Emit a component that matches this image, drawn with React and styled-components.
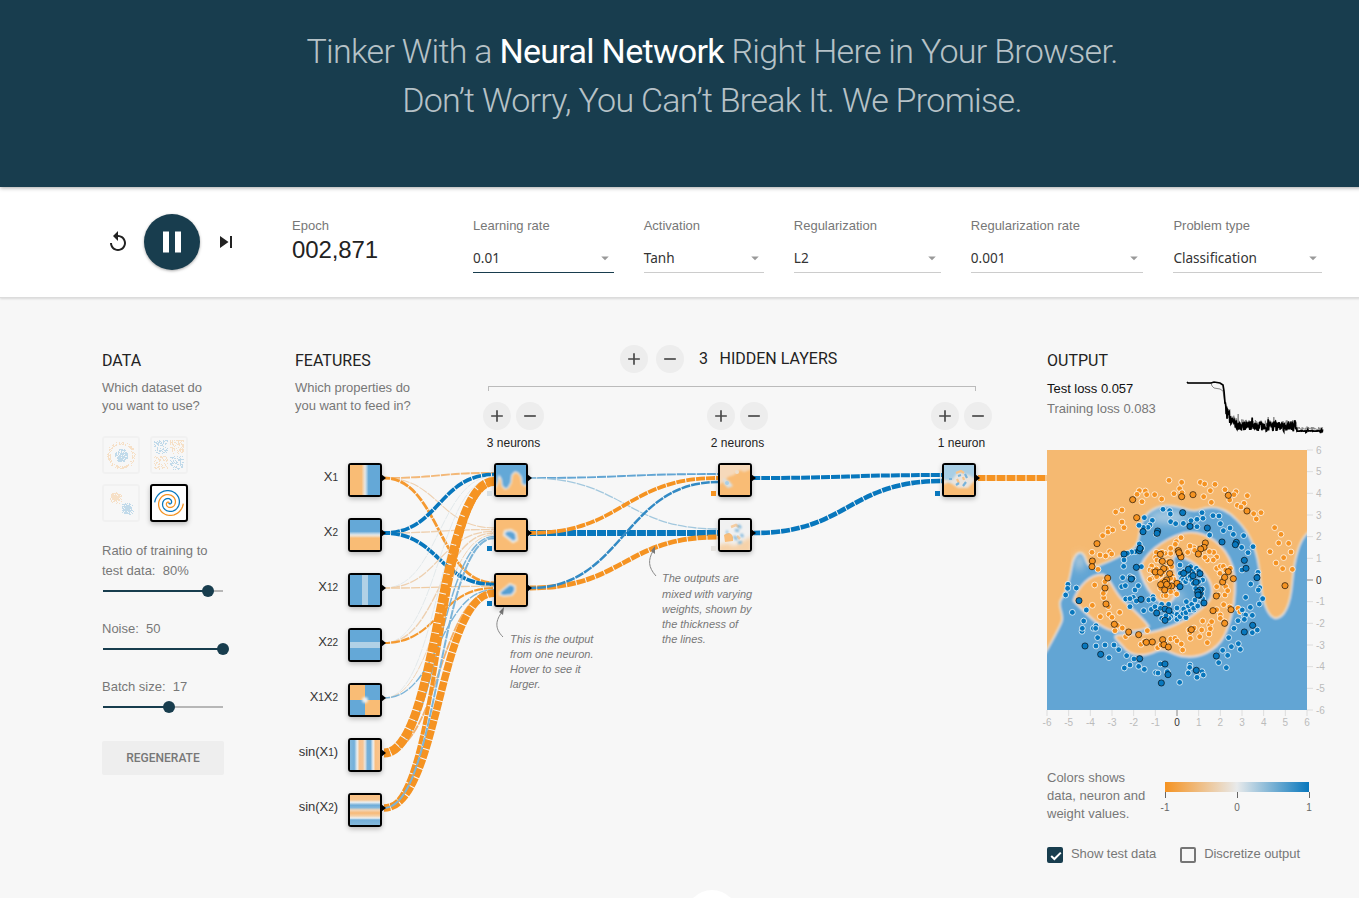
import React from "react";
import styled, { createGlobalStyle } from "styled-components";
import { MdReplay, MdPause, MdSkipNext, MdAdd, MdRemove, MdArrowDropDown } from "react-icons/md";

const ORANGE = "#f59322";
const BLUE = "#0877bd";
const NAVY = "#183d4e";

const GlobalStyle = createGlobalStyle`
  * { box-sizing: border-box; }
  body {
    margin: 0;
    height: 898px;
    overflow: hidden;
    background: #f7f7f7;
    color: #777;
    font-family: "Liberation Sans", Arial, sans-serif;
    font-size: 13px;
  }
`;

const Page = styled.div`
  width: 1424px;
  height: 898px;
  overflow: hidden;
`;

const Header = styled.header`
  position: relative;
  height: 187px;
  padding-top: 27px;
  background: ${NAVY};
  box-shadow: 0 1px 4px rgba(0, 0, 0, 0.35);
  text-align: center;
`;

const Title = styled.div`
  font: 300 34px/49px Roboto, sans-serif;
  color: rgba(255, 255, 255, 0.7);
  letter-spacing: -0.7px;
  b { font-weight: 400; color: #fff; }
`;

const Controls = styled.section`
  display: flex;
  height: 111px;
  padding: 27px 0 0 106px;
  background: #fff;
  border-bottom: 1px solid #dcdcdc;
  box-shadow: 0 1px 2px rgba(0, 0, 0, 0.12);
  > * { flex-shrink: 0; }
`;

const Playback = styled.div`
  display: flex;
  align-items: center;
  width: 186px;
  height: 56px;
  gap: 14px;
  color: #222;
`;

const PlayButton = styled.div`
  display: grid;
  place-items: center;
  width: 56px;
  height: 56px;
  border-radius: 50%;
  background: ${NAVY};
  color: #fff;
  box-shadow: 0 1px 3px rgba(0, 0, 0, 0.35);
`;

const Epoch = styled.div`
  width: 181px;
  padding-top: 4px;
  line-height: 15px;
  strong {
    display: block;
    margin-top: 3px;
    font: 400 24px/28px "Liberation Sans", sans-serif;
    letter-spacing: -0.1px;
    color: #222;
  }
`;

const Field = styled.label`
  width: ${(p) => p.$width}px;
  margin-right: 30px;
  padding-top: 4px;
  line-height: 15px;
`;

const Select = styled.div`
  display: flex;
  justify-content: space-between;
  align-items: center;
  height: 29px;
  margin-top: 11px;
  border-bottom: 1px solid ${(p) => (p.$active ? NAVY : "#ccc")};
  font: 400 13.6px/20px "Noto Sans", sans-serif;
  color: #333;
  svg { color: #999; }
`;

const Main = styled.main`
  display: flex;
  height: 600px;
  padding-left: 102px;
`;

const DataColumn = styled.section`
  width: 193px;
  padding-top: 53px;
`;

const Heading = styled.h2`
  margin: 0;
  font: 400 16px/20px Roboto, sans-serif;
  color: #222;
`;

const Note = styled.p`
  margin: 8px 0 0;
  line-height: 18px;
  letter-spacing: -0.03px;
  white-space: nowrap;
`;

const Datasets = styled.div`
  display: grid;
  grid-template-columns: 38px 38px;
  gap: 10px;
  margin-top: 21px;
`;

const Dataset = styled.div`
  display: grid;
  place-items: center;
  height: 38px;
  border: 2px solid ${(p) => (p.$selected ? "#000" : "rgba(0,0,0,.025)")};
  border-radius: 3px;
  background: ${(p) => (p.$selected ? "#fff" : "transparent")};
  box-shadow: ${(p) => (p.$selected ? "0 2px 5px rgba(0,0,0,.25)" : "none")};
  svg { opacity: ${(p) => (p.$selected ? 1 : 0.22)}; }
`;

const Setting = styled.div`
  width: 140px;
  height: ${(p) => (p.$first ? 78 : 58)}px;
  margin-top: ${(p) => (p.$first ? 19 : 0)}px;
  line-height: 20px;
`;

const Track = styled.div`
  display: flex;
  align-items: center;
  width: 120px;
  height: 18px;
  margin: 1px 0 0 1px;
  background: linear-gradient(90deg, ${NAVY} ${(p) => p.$value}%, #b7b7b7 0) center / 100% 2px no-repeat;
  &::before {
    content: "";
    flex: none;
    width: 12px;
    height: 12px;
    margin-left: calc(${(p) => p.$value}% - 6px);
    border-radius: 50%;
    background: ${NAVY};
  }
`;

const Regenerate = styled.div`
  width: 122px;
  height: 34px;
  margin-top: 6px;
  border-radius: 2px;
  background: #eee;
  font: 500 12px/34px Roboto, sans-serif;
  text-align: center;
`;

const NetworkColumn = styled.section`
  width: 752px;
`;

const NetworkHead = styled.div`
  display: flex;
  height: 155px;
`;

const FeatureHead = styled.div`
  width: 188px;
  padding-top: 53px;
`;

const HiddenHead = styled.div`
  width: 520px;
  padding-top: 47px;
`;

const HiddenTitle = styled.div`
  display: flex;
  align-items: center;
  height: 28px;
  padding-left: 137px;
  gap: 8px;
  font: 400 16px/20px Roboto, sans-serif;
  color: #222;
  span:first-of-type { margin-left: 7px; margin-right: 3.5px; }
`;

const Bracket = styled.div`
  width: 488px;
  height: 5px;
  margin: 13px 0 0 5px;
  border: 1px solid #bbb;
  border-bottom: 0;
`;

const RoundButton = styled.div`
  display: grid;
  place-items: center;
  width: 28px;
  height: 28px;
  border-radius: 50%;
  background: #ededed;
  color: #484848;
`;

const LayerRow = styled.div`
  display: flex;
  gap: 163px;
  margin-top: 11px;
`;

const Layer = styled.div`
  display: grid;
  grid-template-columns: 28px 28px;
  gap: 0 5px;
  width: 61px;
  color: #222;
  font-size: 12px;
  text-align: center;
  p { grid-column: 1 / 3; margin: 5px 0 0; line-height: 16px; white-space: nowrap; }
`;

const Canvas = styled.div`
  position: relative;
  height: 400px;
`;

const Links = styled.svg`
  position: absolute;
  left: 0;
  top: 0;
  overflow: visible;
`;

const Node = styled.div`
  position: absolute;
  left: ${(p) => p.$x}px;
  top: ${(p) => p.$y}px;
  width: 34px;
  height: 34px;
  border: 2px solid #000;
  border-radius: 3px;
  box-shadow: 0 2px 5px rgba(0, 0, 0, 0.25);
  svg { display: block; width: 30px; height: 30px; }
`;

const FeatureLabel = styled.div`
  position: absolute;
  right: ${752 - 43}px;
  top: ${(p) => p.$y}px;
  font-size: 13px;
  line-height: 20px;
  letter-spacing: -0.05px;
  white-space: nowrap;
  color: #333;
  small { font-size: 10px; }
`;

const Bias = styled.div`
  position: absolute;
  left: ${(p) => p.$x}px;
  top: ${(p) => p.$y}px;
  width: 5px;
  height: 5px;
  background: ${(p) => p.$color};
`;

const Callout = styled.div`
  position: absolute;
  left: ${(p) => p.$x}px;
  top: ${(p) => p.$y}px;
  font-size: 11px;
  font-style: italic;
  line-height: 15px;
  letter-spacing: -0.02px;
  white-space: nowrap;
`;

const OutputColumn = styled.section`
  width: 290px;
  padding-top: 53px;
`;

const LossRow = styled.div`
  display: flex;
  height: 79px;
  padding-top: 8px;
  line-height: 20px;
  > div { width: 140px; white-space: nowrap; letter-spacing: -0.03px; }
  p { margin: 0; }
  p:first-child { color: #111; }
  svg { margin-top: -2px; overflow: visible; }
`;

const Plot = styled.svg`
  display: block;
  overflow: visible;
  font-size: 10px;
`;

const Legend = styled.div`
  display: flex;
  gap: 12px;
  margin-top: 39px;
  line-height: 18px;
  white-space: nowrap;
  p { margin: 0; width: 106px; }
  svg { margin-top: 13px; overflow: visible; font-size: 10px; }
`;

const Checks = styled.div`
  display: flex;
  align-items: center;
  gap: 8px;
  margin-top: 24px;
  line-height: 18px;
  letter-spacing: -0.06px;
  span { margin-top: -2px; }
  span + div { margin-left: 16px; }
`;

const Box = styled.div`
  display: grid;
  place-items: center;
  width: 16px;
  height: 16px;
  border: 2px solid ${(p) => (p.$on ? NAVY : "#757575")};
  border-radius: 2px;
  background: ${(p) => (p.$on ? NAVY : "transparent")};
`;

const MoreButton = styled.div`
  position: absolute;
  left: 686px;
  top: 890px;
  width: 52px;
  height: 52px;
  border-radius: 50%;
  background: #fff;
`;

const pairs = (s) => s.split(";").map((p) => p.split(",").map(Number));

const ORANGE_TRAIN = pairs("387,106;425,112;481,112;494,117;525,118;511,137;555,134;588,140;582,149;622,152;569,165;612,175;592,181;603,186;641,206;649,222;663,203;704,248;723,268;716,294;746,295;690,320;753,321;731,338;708,354;728,371;757,373;419,131;402,146;426,143;344,149;365,162;298,137;316,138;320,149;291,148;306,170;491,155;514,172;246,195;227,201;246,231;252,248;205,251;204,261;218,255;188,272;156,322;180,330;209,320;215,327;197,333;174,373;158,362;164,420;195,410;193,440;191,458;190,445;205,485;157,481;239,502;207,508;216,517;181,515;232,541;247,549;225,557;257,575;265,566;322,557;303,598;313,590;353,608;371,588;375,598;392,582;405,580;411,588;424,597;428,615;363,600;451,580;450,563;447,555;462,549;479,575;485,555;488,528;502,593;507,567;509,541;511,551;515,530;530,494;541,510;541,520;553,530;535,450;530,425;551,479;555,450;557,425;563,437;569,486;594,490;600,500;549,400;540,385;530,370;541,364;550,364;557,375;571,370;530,336;521,322;508,320;520,345;502,345;495,337;490,305;485,310;479,325;462,308;464,316;450,303;443,322;423,278;409,290;406,298;392,325;392,310;375,325;366,322;349,322;347,337;351,345;362,348;378,352;385,350;335,363;330,375;338,378;349,372;362,390;370,380;380,370;395,365;388,385;397,393;401,403;392,400;375,415;385,425;378,425;370,405;365,410;340,398;335,400;330,403;395,435;400,440;410,447;392,440;362,430;370,452;378,452;350,395");
const BLUE_TRAIN = pairs("369,193;389,197;391,207;392,230;407,236;430,235;453,227;471,223;486,203;489,220;519,212;537,213;541,236;570,249;471,245;550,257;580,268;611,272;509,270;639,305;605,307;624,323;606,375;654,382;652,393;632,417;659,428;655,435;617,457;668,461;658,477;631,487;607,495;612,510;617,510;637,511;594,527;613,523;582,550;637,563;652,555;566,578;595,596;574,605;601,613;548,616;563,631;536,653;559,668;450,660;449,667;445,684;486,680;490,690;471,697;419,712;347,683;354,684;361,657;382,680;296,664;313,673;270,660;253,669;282,642;260,632;236,614;222,600;195,600;168,603;207,638;173,578;160,550;168,542;167,550;126,559;127,550;131,528;139,495;97,502;77,450;84,418;83,430;109,429;313,218;337,226;330,240;324,247;310,247;297,241;349,267;298,297;305,310;286,320;275,321;262,325;251,335;252,345;251,364;248,398;245,425;270,395;276,398;285,435;295,422;256,422;257,462;280,457;270,485;289,468;270,461;311,497;326,465;339,455;340,463;334,493;345,485;350,500;365,478;361,490;375,490;386,478;395,505;411,489;411,508;411,523;392,515;365,520;372,525;387,520;378,512;420,515;429,505;431,492;438,518;438,503;450,495;445,483;455,478;462,495;439,470;461,490;473,483;465,465;488,461;485,445;479,455;487,432;488,405;476,410;467,430;420,360;421,385;433,378;443,375;452,365;460,378;469,370;476,378;438,390;448,385;425,400;430,405;437,410;443,400;450,395;455,405;419,415;415,420;460,415;304,365;279,400");
const ORANGE_TEST = pairs("425,155;459,149;565,151;621,198;278,164;290,218;171,296;157,348;156,365;203,399;195,429;198,477;223,538;266,561;296,569;319,592;337,591;368,584;372,599;385,606;454,554;554,535;519,497;573,494;529,453;548,411;554,397;565,380;580,401;735,422;496,294;492,307;482,312;475,327;361,328;415,317;420,330;423,336;391,353;367,349;371,371;346,381;361,382;389,386;380,405;375,412;362,419;411,415;395,423;385,423;374,435;417,323;380,418");
const BLUE_TEST = pairs("428,203;450,244;502,249;546,291;589,292;586,299;613,346;618,370;651,398;638,541;613,561;529,633;469,676;375,657;384,689;364,714;299,641;182,628;135,603;117,467;252,327;298,317;300,310;289,367;274,402;303,463;309,260;353,258;351,265;375,492;387,497;350,504;375,526;492,474;480,435;468,412;480,386;459,392;445,373;431,385;473,441;478,450;420,425;474,450");

const random = (seed) => () => {
  seed = (seed * 16807) % 2147483647;
  return seed / 2147483647;
};

const gauss = (r) => r() + r() + r() + r() - 2;

function datasetPoints(kind) {
  const r = random(kind === "circle" ? 41 : kind === "xor" ? 97 : 23);
  return Array.from({ length: kind === "xor" ? 340 : 340 }, (_, i) => {
    const first = i % 2 === 0;
    if (kind === "circle") {
      const a = r() * 6.283;
      const d = first ? Math.sqrt(r()) * 6.5 : 10.8 + r() * 3.2;
      return [16 + d * Math.cos(a), 16 + d * Math.sin(a), first];
    }
    if (kind === "xor") {
      const x = r() * 28 - 14;
      const y = r() * 28 - 14;
      return [15.5 + x + Math.sign(x), 15.5 + y + Math.sign(y), x * y > 0];
    }
    return first
      ? [21.5 + gauss(r) * 4, 21.5 + gauss(r) * 4, true]
      : [10 + gauss(r) * 4, 10 + gauss(r) * 4, false];
  });
}

function spiral(phase) {
  let d = "";
  for (let i = 0; i <= 90; i++) {
    const t = i / 90;
    const a = t * 11.2 + phase;
    d += `${i ? "L" : "M"}${(15 + t * 13.4 * Math.sin(a)).toFixed(2)} ${(15 + t * 13.4 * Math.cos(a)).toFixed(2)}`;
  }
  return d;
}

function DatasetPicture({ kind }) {
  if (kind === "spiral") {
    return (
      <svg width="32" height="32" viewBox="0 0 30 30" fill="none" strokeWidth="1.2">
        <path d={spiral(2.9)} stroke={ORANGE} />
        <path d={spiral(6.04)} stroke={BLUE} />
      </svg>
    );
  }
  return (
    <svg width="32" height="32" viewBox="0 0 32 32" shapeRendering="crispEdges">
      {datasetPoints(kind).map(([x, y, blue], i) => (
        <rect key={i} x={Math.round(x)} y={Math.round(y)} width="1" height="1" fill={blue ? BLUE : ORANGE} />
      ))}
    </svg>
  );
}

const LO = "#f9bc75";
const LB = "#64a8d7";
const PALE = "#edf0f1";

const THUMBS = {
  x1: <rect width="30" height="30" fill="url(#stepH)" />,
  x2: <rect width="30" height="30" fill="url(#stepV)" />,
  x12: (
    <>
      <rect width="30" height="30" fill={LB} />
      <rect x="12" y="-5" width="6" height="40" fill="#b1d1e6" filter="url(#soft05)" />
    </>
  ),
  x22: (
    <>
      <rect width="30" height="30" fill={LB} />
      <rect x="-5" y="12" width="40" height="6" fill="#b1d1e6" filter="url(#soft05)" />
    </>
  ),
  x1x2: (
    <>
      <rect width="30" height="30" fill={LO} />
      <path d="M15 0H30V15H0V30H15Z" fill={LB} />
      <circle cx="15" cy="15" r="3" fill={PALE} filter="url(#soft1)" />
    </>
  ),
  sin1: <rect width="30" height="30" fill="url(#sinH)" />,
  sin2: <rect width="30" height="30" fill="url(#sinV)" />,
  n1: (
    <>
      <rect width="30" height="30" fill={LO} />
      <path d="M-3-3H33V18L29 21 26 19 25 12 22 8 19 7 16 10 15 18 12 23 9 24 6 21 5 14 3 11 2 17 0 22H-3Z" fill={LB} stroke={PALE} strokeWidth="1.2" filter="url(#soft07)" />
    </>
  ),
  n2: (
    <>
      <rect width="30" height="30" fill={LO} />
      <path d="M9 11L15 10 20 13 21 20 17 22 12 18 8 15Z" fill="#5ba3d5" stroke={PALE} strokeWidth="2" filter="url(#soft1)" />
    </>
  ),
  n3: (
    <>
      <rect width="30" height="30" fill={LO} />
      <path d="M4 17L9 13 14 9 19 11 19 16 16 20 8 21 4 20Z" fill="#559fd2" stroke={PALE} strokeWidth="1.6" filter="url(#soft1)" />
    </>
  ),
  a: (
    <>
      <rect width="30" height="30" fill={LO} />
      <path d="M-2-2H32V4L24 7 20 5 14 10 8 12 4 17-2 20Z" fill="#f6d9ba" filter="url(#soft1)" />
      <path d="M3 13L9 16 13 21 8 23 4 19Z" fill="#d8e3ea" filter="url(#soft1)" />
      <circle cx="7" cy="18" r="2" fill="#a9cee5" filter="url(#soft05)" />
      <circle cx="17" cy="7" r="2" fill="#eddfce" filter="url(#soft05)" />
    </>
  ),
  b: (
    <>
      <rect width="30" height="30" fill="#f1f1f1" />
      <path d="M-2 25L8 23 14 26 32 16V33H-2Z" fill="#f6d2a8" filter="url(#soft2)" />
      <path d="M4 15Q10 10 13 17L13 21 5 22Z" fill="#f9bd79" filter="url(#soft05)" />
      <path d="M11 7L16 5 19 7M17 16L20 19" stroke="#f5cda1" strokeWidth="2.5" fill="none" filter="url(#soft05)" />
      <path d="M15 10L19 11M14 16L17 20M21 14L23 17M18 23L22 22M6 12H8M18 5 21 8" stroke="#7db6dc" strokeWidth="2.6" fill="none" filter="url(#soft07)" />
    </>
  ),
  c: (
    <>
      <rect width="30" height="30" fill={LO} />
      <path d="M-2-2H32V12L22 18 15 15 6 18-2 14Z" fill="#a8cee5" filter="url(#soft1)" />
      <path d="M-2 15L8 15 14 7 25 10 32 14 24 23 14 23 5 17-2 20Z" fill="#e9e4df" filter="url(#soft1)" />
      <path d="M12 8L17 6 20 8M13 14L15 18M19 12 20 15" stroke="#f8c489" strokeWidth="2.2" fill="none" filter="url(#soft05)" />
      <path d="M14 11L17 10M21 9L23 13M22 17L19 21M15 18L12 20M5 14H8" stroke="#79b3da" strokeWidth="2.2" fill="none" filter="url(#soft05)" />
    </>
  ),
};

const FEATURES = [
  ["x1", <>X<small>1</small></>],
  ["x2", <>X<small>2</small></>],
  ["x12", <>X<small>12</small></>],
  ["x22", <>X<small>22</small></>],
  ["x1x2", <>X<small>1</small>X<small>2</small></>],
  ["sin1", <>sin(X<small>1</small>)</>],
  ["sin2", <>sin(X<small>2</small>)</>],
];

const TAN = "#eed0b0";
const GREY = "#dde4e7";
const SKY = "#7cb4d8";

/* [source layer, source row, target layer, target row, inputs, colour, width] */
const LINKS = [
  [0, 0, 1, 0, 7, "#f3b878", 1.8], [0, 0, 1, 1, 7, TAN, 1.1], [0, 0, 1, 2, 7, "#f5992f", 2.8],
  [0, 1, 1, 0, 7, BLUE, 3.7], [0, 1, 1, 1, 7, TAN, 1.4], [0, 1, 1, 2, 7, BLUE, 3.8],
  [0, 2, 1, 0, 7, GREY, 0.8], [0, 2, 1, 1, 7, TAN, 1.3], [0, 2, 1, 2, 7, "#efcba3", 1.4],
  [0, 3, 1, 0, 7, GREY, 0.8], [0, 3, 1, 1, 7, TAN, 1.4], [0, 3, 1, 2, 7, "#f5992f", 2.2],
  [0, 4, 1, 0, 7, GREY, 0.8], [0, 4, 1, 1, 7, TAN, 0.9], [0, 4, 1, 2, 7, SKY, 1.4],
  [0, 5, 1, 1, 7, SKY, 1.5], [0, 5, 1, 2, 7, "#f3b06b", 1.8],
  [0, 6, 1, 0, 7, ORANGE, 4], [0, 6, 1, 2, 7, ORANGE, 7.5], [0, 6, 1, 1, 7, SKY, 2],
  [0, 5, 1, 0, 7, ORANGE, 9],
  [1, 0, 2, 0, 3, "#62a5d3", 1.9], [1, 0, 2, 1, 3, "#a3c8de", 1.3],
  [1, 1, 2, 1, 3, BLUE, 6], [1, 1, 2, 0, 3, ORANGE, 3.8],
  [1, 2, 2, 1, 3, ORANGE, 4.8], [1, 2, 2, 0, 3, "#338ac4", 2.5],
  [2, 0, 3, 0, 2, BLUE, 4], [2, 1, 3, 0, 2, BLUE, 4.6],
];

const NODE_X = [53, 199, 423, 647];
const rowY = (row) => 25 + row * 55;

function linkPath([sl, sr, tl, tr, n]) {
  const x0 = NODE_X[sl] + 36;
  const x1 = NODE_X[tl];
  const y0 = rowY(sr);
  const y1 = rowY(tr) + ((sr - (n - 1) / 2) / n) * 12;
  const mid = (x0 + x1) / 2;
  return `M${x0} ${y0}C${mid} ${y0} ${mid} ${y1} ${x1} ${y1}`;
}

const NODES = [
  ...FEATURES.map(([kind], i) => [0, i, kind]),
  [1, 0, "n1"], [1, 1, "n2"], [1, 2, "n3"], [2, 0, "a"], [2, 1, "b"], [3, 0, "c"],
];

const BIASES = [
  [192, 38, "#d8e0e5"], [192, 93, BLUE], [192, 148, BLUE],
  [416, 38, ORANGE], [416, 93, "#e6e3df"], [640, 38, BLUE],
];

function Network() {
  return (
    <Canvas>
      <Links width="752" height="400" fill="none">
        <defs>
          <filter id="soft05" x="-20%" y="-20%" width="140%" height="140%"><feGaussianBlur stdDeviation="0.6" /></filter>
          <filter id="soft07" x="-30%" y="-30%" width="160%" height="160%"><feGaussianBlur stdDeviation="0.8" /></filter>
          <filter id="soft1" x="-40%" y="-40%" width="180%" height="180%"><feGaussianBlur stdDeviation="1.1" /></filter>
          <filter id="soft2" x="-20%" y="-20%" width="140%" height="140%"><feGaussianBlur stdDeviation="2" /></filter>
          <linearGradient id="stepH">
            <stop offset=".38" stopColor={LO} /><stop offset=".44" stopColor="#f3d3ae" /><stop offset=".5" stopColor="#e6e6e3" />
            <stop offset=".56" stopColor="#a9cde5" /><stop offset=".62" stopColor={LB} />
          </linearGradient>
          <linearGradient id="stepV" x2="0" y2="1">
            <stop offset=".38" stopColor={LB} /><stop offset=".44" stopColor="#a9cde5" /><stop offset=".5" stopColor="#e6e6e3" />
            <stop offset=".56" stopColor="#f3d3ae" /><stop offset=".6" stopColor={LO} />
          </linearGradient>
          <linearGradient id="sinH">
            <stop offset="0" stopColor="#84b9dc" /><stop offset=".14" stopColor="#73afda" /><stop offset=".24" stopColor={PALE} />
            <stop offset=".32" stopColor="#f8c08a" /><stop offset=".43" stopColor="#f6c594" /><stop offset=".5" stopColor="#e8e5e0" />
            <stop offset=".58" stopColor="#76b0d9" /><stop offset=".68" stopColor="#70add8" /><stop offset=".77" stopColor={PALE} />
            <stop offset=".85" stopColor="#f9bf82" /><stop offset="1" stopColor="#f8c58f" />
          </linearGradient>
          <linearGradient id="sinV" x2="0" y2="1">
            <stop offset="0" stopColor="#f9c083" /><stop offset=".16" stopColor="#f6c48e" /><stop offset=".24" stopColor={PALE} />
            <stop offset=".34" stopColor="#6dabd8" /><stop offset=".42" stopColor="#84b8dc" /><stop offset=".5" stopColor="#f1d5b8" />
            <stop offset=".6" stopColor="#f8b976" /><stop offset=".7" stopColor="#f3d1aa" /><stop offset=".77" stopColor={PALE} />
            <stop offset=".83" stopColor="#74afd9" /><stop offset="1" stopColor="#84b9dc" />
          </linearGradient>
        </defs>
        <g strokeDasharray="9 1" strokeDashoffset="3">
          {LINKS.map((link, i) => (
            <path key={i} d={linkPath(link)} stroke={link[5]} strokeWidth={link[6]} />
          ))}
          <path d="M683 25H752" stroke={ORANGE} strokeWidth="6" strokeDashoffset="1.5" />
        </g>
        {NODES.map(([layer, row]) => (
          <path key={`${layer}-${row}`} d={`M${NODE_X[layer] + 33} ${rowY(row) - 4}l5 4l-5 4z`} fill="#000" />
        ))}
        <g stroke="#888" strokeWidth="1">
          <path d="M208 184C199 175 201 167 207 159" />
          <path d="M361 123C353 114 353 107 358 98" />
        </g>
        <path d="M209 154L208 162 204 159ZM360 93L360 101 356 98Z" fill="#777" />
      </Links>
      {FEATURES.map(([kind, label], i) => (
        <FeatureLabel key={kind} $y={14 + i * 55}>{label}</FeatureLabel>
      ))}
      {NODES.map(([layer, row, kind]) => (
        <Node key={kind} $x={NODE_X[layer]} $y={10 + row * 55}>
          <svg viewBox="0 0 30 30">{THUMBS[kind]}</svg>
        </Node>
      ))}
      {BIASES.map(([x, y, color]) => <Bias key={`${x}-${y}`} $x={x} $y={y} $color={color} />)}
      <Callout $x={215} $y={179}>This is the output<br />from one neuron.<br />Hover to see it<br />larger.</Callout>
      <Callout $x={367} $y={118}>The outputs are</Callout>
      <Callout $x={367} $y={134}>mixed with varying<br />weights, shown by<br />the thickness of<br />the lines.</Callout>
    </Canvas>
  );
}

function lossLine(seed, training) {
  const r = random(seed);
  let d = training
    ? "M0 6H24L25 9L27 11L33 12L36 14L37 20L38 27"
    : "M0 5L1 6H24L27 5L33 6L36 8L37 14L38 26";
  for (let x = 38.4; x < 136; x += 0.4) {
    const fall = 20 * Math.exp(-(x - 38) / 5);
    if (x < 110) {
      const spike = r() > 0.93 ? 4 : 0;
      d += `L${x.toFixed(1)} ${(49.5 - training * 1.5 - fall + (r() - 0.5) * (x < 52 ? 12 : 10) - spike).toFixed(1)}`;
    } else {
      const burst = (x > 118.5 && x < 121) || x > 133.5;
      d += `L${x.toFixed(1)} ${(54 - training * 2.5 + (r() - 0.5) * (burst ? 4.5 : training ? 3 : 0.5)).toFixed(1)}`;
    }
  }
  return d;
}

const dots = (points, color, test) =>
  points.map(([x, y], i) => <circle key={`${color}${test}${i}`} cx={x} cy={y} r={test ? 9.3 : 8.7} fill={color} />);

const TICKS = Array.from({ length: 13 }, (_, i) => i - 6);

function Output() {
  return (
    <Plot width="280" height="280">
      <svg width="260" height="260" viewBox="21 15 780 780">
        <defs>
          <filter id="edge" x="-5%" y="-5%" width="110%" height="110%"><feGaussianBlur stdDeviation="3.6" /></filter>
          <filter id="haze" x="-80%" y="-80%" width="260%" height="260%"><feGaussianBlur stdDeviation="12" /></filter>
        </defs>
        <rect x="21" y="15" width="780" height="780" fill="#f5b971" />
        <g stroke="#e6e4e0" strokeWidth="5" strokeLinejoin="round" filter="url(#edge)">
          <path d="M0 650L21 615C40 580 55 555 65 530C73 505 51 485 62 465C82 438 90 395 97 355C107 320 127 310 138 345C145 367 157 372 178 361C215 347 249 330 279 311C299 293 296 270 302 246C310 207 337 188 376 182C421 178 453 207 481 193C528 177 562 193 591 225C636 269 655 328 660 394C665 453 675 510 705 520C739 518 752 471 757 409C763 344 774 291 801 265L830 240V830H0Z" fill="#62a5d4" />
          <path d="M299 374C311 326 367 283 431 264C496 251 558 300 578 365C596 435 578 519 553 573C528 620 475 641 430 634C400 632 382 608 350 618C315 636 274 635 252 608C237 589 216 577 230 570C278 568 321 567 355 556C410 542 463 512 500 476C525 451 519 414 490 382C468 354 438 337 407 331C393 337 404 368 411 396C417 431 407 463 382 480C348 474 315 428 299 374Z" fill="#f5b971" />
          <path d="M100 467C115 423 149 388 187 388C211 393 219 440 252 469C280 494 308 518 327 545C306 561 252 562 218 557C181 549 143 512 100 467Z" fill="#f5b971" />
        </g>
        <ellipse cx="385" cy="216" rx="60" ry="22" fill="#bcd3e3" opacity=".75" filter="url(#haze)" />
        <ellipse cx="118" cy="350" rx="9" ry="26" fill="#ece9e5" opacity=".9" filter="url(#haze)" />
        <ellipse cx="325" cy="415" rx="7" ry="46" fill="#ece9e5" opacity=".5" transform="rotate(-28 325 415)" filter="url(#haze)" />
        <ellipse cx="413" cy="455" rx="18" ry="12" fill="#ece9e5" opacity=".6" filter="url(#haze)" />
        <g stroke="#fff" strokeOpacity=".75" strokeWidth="3">
          {dots(ORANGE_TRAIN, ORANGE, 0)}
          {dots(BLUE_TRAIN, BLUE, 0)}
        </g>
        <g stroke="#000" strokeOpacity=".6" strokeWidth="3">
          {dots(ORANGE_TEST, ORANGE, 1)}
          {dots(BLUE_TEST, BLUE, 1)}
        </g>
      </svg>
      {TICKS.map((t) => {
        const p = 130 + (t * 130) / 6;
        const fill = t === 0 ? "#333" : "#bbb";
        const stroke = t === 0 ? "#888" : "#ddd";
        return (
          <g key={t} fill={fill} stroke="none">
            <path d={`M${p} 260v6M260 ${260 - p}h6`} stroke={stroke} />
            <text x={p} y="276" textAnchor="middle">{t}</text>
            <text x="269" y={263.5 - p}>{t}</text>
          </g>
        );
      })}
    </Plot>
  );
}

const FIELDS = [
  ["Learning rate", "0.01", 140.7],
  ["Activation", "Tanh", 120.1],
  ["Regularization", "L2", 147],
  ["Regularization rate", "0.001", 172.6],
  ["Problem type", "Classification", 148.6],
];

const LAYERS = ["3 neurons", "2 neurons", "1 neuron"];

function PlusMinus() {
  return (
    <>
      <RoundButton><MdAdd size={20} /></RoundButton>
      <RoundButton><MdRemove size={20} /></RoundButton>
    </>
  );
}

export default function App() {
  return (
    <Page>
      <GlobalStyle />
      <Header>
        <Title>Tinker With a <b>Neural Network</b> Right Here in Your Browser.</Title>
        <Title>Don’t Worry, You Can’t Break It. We Promise.</Title>
      </Header>
      <Controls>
        <Playback>
          <MdReplay size={24} />
          <PlayButton><MdPause size={36} /></PlayButton>
          <MdSkipNext size={24} />
        </Playback>
        <Epoch>Epoch<strong>002,871</strong></Epoch>
        {FIELDS.map(([label, value, width], i) => (
          <Field key={label} $width={width}>
            {label}
            <Select $active={i === 0}>{value}<MdArrowDropDown size={18} /></Select>
          </Field>
        ))}
      </Controls>
      <Main>
        <DataColumn>
          <Heading>DATA</Heading>
          <Note>Which dataset do<br />you want to use?</Note>
          <Datasets>
            {["circle", "xor", "gauss", "spiral"].map((kind) => (
              <Dataset key={kind} $selected={kind === "spiral"}><DatasetPicture kind={kind} /></Dataset>
            ))}
          </Datasets>
          <Setting $first>Ratio of training to<br />test data:&nbsp; 80%<Track $value={87.5} /></Setting>
          <Setting>Noise:&nbsp; 50<Track $value={100} /></Setting>
          <Setting>Batch size:&nbsp; 17<Track $value={55} /></Setting>
          <Regenerate>REGENERATE</Regenerate>
        </DataColumn>
        <NetworkColumn>
          <NetworkHead>
            <FeatureHead>
              <Heading>FEATURES</Heading>
              <Note>Which properties do<br />you want to feed in?</Note>
            </FeatureHead>
            <HiddenHead>
              <HiddenTitle><PlusMinus /><span>3</span><span>HIDDEN LAYERS</span></HiddenTitle>
              <Bracket />
              <LayerRow>
                {LAYERS.map((text) => <Layer key={text}><PlusMinus /><p>{text}</p></Layer>)}
              </LayerRow>
            </HiddenHead>
          </NetworkHead>
          <Network />
        </NetworkColumn>
        <OutputColumn>
          <Heading>OUTPUT</Heading>
          <LossRow>
            <div>
              <p>Test loss 0.057</p>
              <p>Training loss 0.083</p>
            </div>
            <svg width="137" height="60" fill="none">
              <path d={lossLine(77, 1)} stroke="#888" />
              <path d={lossLine(31, 0)} stroke="#000" strokeWidth="1.7" />
            </svg>
          </LossRow>
          <Output />
          <Legend>
            <p>Colors shows<br />data, neuron and<br />weight values.</p>
            <svg width="145" height="40" fill="#666">
              <defs>
                <linearGradient id="scale">
                  <stop offset="0" stopColor={ORANGE} /><stop offset=".5" stopColor="#e8eaeb" /><stop offset="1" stopColor={BLUE} />
                </linearGradient>
              </defs>
              <rect width="144" height="10" fill="url(#scale)" />
              <path d="M.5 10v6M72.5 10v6M144.5 10v6" stroke="#666" />
              <text x="0" y="29" textAnchor="middle">-1</text>
              <text x="72" y="29" textAnchor="middle">0</text>
              <text x="144" y="29" textAnchor="middle">1</text>
            </svg>
          </Legend>
          <Checks>
            <Box $on>
              <svg width="14" height="14" viewBox="0 0 14 14" fill="none"><path d="M2.2 7L5.4 10 11.8 3.6" stroke="#fff" strokeWidth="2" /></svg>
            </Box>
            <span>Show test data</span>
            <Box />
            <span>Discretize output</span>
          </Checks>
        </OutputColumn>
      </Main>
      <MoreButton />
    </Page>
  );
}
